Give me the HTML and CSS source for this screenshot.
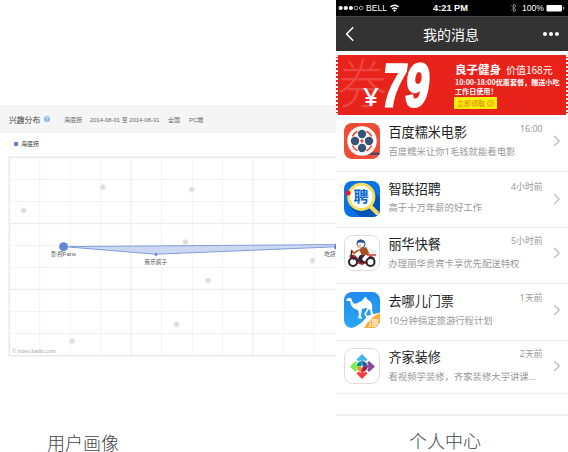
FILE: index.html
```html
<!DOCTYPE html>
<html lang="zh-CN">
<head>
<meta charset="utf-8">
<title>用户画像 · 个人中心</title>
<link rel="stylesheet" href="styles.css">
</head>
<body>
<main class="page">
  <section class="profile">
    <header class="filter"><h2>兴趣分布</h2><span class="help">?</span><span class="f-word">海底捞</span><span class="f-date">2014-08-01 至 2014-08-31</span><span class="f-area">全国</span><span>PC端</span></header>
    <div class="legend"><i></i>海底捞</div>
    <svg class="chart" width="336" height="204" viewBox="0 154 336 204">
      <path class="grid" d="M39.8 158V355M70.2 158V355M100.7 158V355M161.5 158V355M192.3 158V355M222.5 158V355M283.5 158V355M314 158V355M10 179.5H336M10 201.5H336M10 245.5H336M10 267.5H336M10 311.5H336M10 333.5H336"/>
      <path class="grid major" d="M131 158V355M253 158V355M10 223.5H336M10 289.5H336"/>
      <path class="frame" d="M336 157.3H9.3V355.7H336"/>
      <g class="dots"><circle cx="23.6" cy="210.5" r="2.7"/><circle cx="102.8" cy="187.2" r="2.7"/><circle cx="191.8" cy="189.4" r="2.7"/><circle cx="185.5" cy="242.2" r="2.7"/><circle cx="312.5" cy="260.6" r="2.7"/><circle cx="208.1" cy="280.5" r="2.7"/><circle cx="176.5" cy="324.4" r="2.7"/><circle cx="72" cy="341" r="2.7"/></g>
      <path class="area" d="M63.5 246.6L336 244.6V246.8L156 254.2Z"/>
      <circle class="node" cx="63.6" cy="246.7" r="4.8"/><circle class="node" cx="156" cy="254.2" r="2"/><circle class="node" cx="337" cy="246.5" r="3.6"/>
      <text x="51" y="256.3" textLength="25" lengthAdjust="spacingAndGlyphs">影视Fans</text><text x="144.3" y="263.6" textLength="23" lengthAdjust="spacingAndGlyphs">音乐疯子</text><text x="324.3" y="256.3" textLength="11.5">吃货</text>
      <text class="source" x="12" y="353" textLength="44" lengthAdjust="spacingAndGlyphs">© index.baidu.com</text>
    </svg>
    <p class="caption">用户画像</p>
  </section>

  <section class="center">
    <div class="status">
      <svg width="232" height="16" viewBox="0 0 232 16">
        <g fill="#fff"><circle cx="4.7" cy="8" r="2.1"/><circle cx="9.8" cy="8" r="2.1"/><circle cx="14.9" cy="8" r="2.1"/></g>
        <g fill="none" stroke="#ccc" stroke-width=".8"><circle cx="20" cy="8" r="1.8"/><circle cx="25.1" cy="8" r="1.8"/></g>
        <text x="30" y="11" textLength="21" lengthAdjust="spacingAndGlyphs">BELL</text>
        <g fill="none" stroke="#fff" stroke-width="1.3"><path d="M54.3 7Q58.5 3.5 62.7 7M56 9Q58.5 7 61 9"/></g><path fill="#fff" d="M57 10.2Q58.5 9 60 10.2L58.5 12Z"/>
        <text class="clock" x="97" y="11.3" textLength="35" lengthAdjust="spacingAndGlyphs">4:21 PM</text>
        <path fill="none" stroke="#888" stroke-width=".9" d="M175.3 5.4L180 10L177.7 12V3.8L180 6L175.3 10.4"/>
        <text x="186" y="11.3" textLength="22" lengthAdjust="spacingAndGlyphs">100%</text>
        <rect x="210.5" y="5" width="15.5" height="6.5" rx="1" fill="#fff"/><rect x="227" y="7" width="1.2" height="2.5" fill="#aaa"/>
      </svg>
    </div>
    <nav class="nav">
      <svg width="10" height="16" viewBox="0 0 10 16"><path d="M8.2 1.2L1.6 8L8.2 14.8" fill="none" stroke="#fff" stroke-width="1.5"/></svg>
      <h1>我的消息</h1>
      <svg width="18" height="6" viewBox="0 0 18 6" fill="#fff"><circle cx="3" cy="3" r="2"/><circle cx="9" cy="3" r="2"/><circle cx="15" cy="3" r="2"/></svg>
    </nav>
    <div class="coupon">
      <svg class="price" width="119" height="60" viewBox="0 0 119 60">
        <text class="mark" x="-1" y="49" textLength="50" lengthAdjust="spacingAndGlyphs">券</text>
        <text class="yen" x="25" y="51" textLength="16" lengthAdjust="spacingAndGlyphs">¥</text>
        <text class="num" transform="translate(42 51.2) skewX(-7)" textLength="47" lengthAdjust="spacingAndGlyphs">79</text>
      </svg>
      <div class="offer">
        <div class="shop"><b>良子健身</b><span>价值168元</span></div>
        <p>10:00-18:00优惠套餐，赠送小吃<br>工作日使用！</p>
        <div class="claim">立即领取<svg width="7" height="7" viewBox="0 0 7 7"><circle cx="3.5" cy="3.5" r="2.9"/><path d="M2.9 1.8L4.3 3.5L2.9 5.2"/></svg></div>
      </div>
    </div>
    <ul class="list">
      <li class="r1">
        <svg class="icon" viewBox="0 0 36 36"><rect width="36" height="36" rx="8" fill="#f04c38"/><path d="M20 29.5H35.5V32H20Z" fill="#59465c"/><circle cx="18" cy="18" r="14.7" fill="#fff"/><g fill="#365574"><circle cx="18" cy="11" r="4.2"/><circle cx="25" cy="18" r="4.2"/><circle cx="18" cy="25" r="4.2"/><circle cx="11" cy="18" r="4.2"/></g><circle cx="18" cy="18" r="1.7" fill="#f04c38"/><g fill="none" stroke="#f04c38" stroke-width="1.7"><path d="M22.5 8.3Q26 10 27.7 13.5M27.7 22.5Q26 26 22.5 27.7M13.5 27.7Q10 26 8.3 22.5M8.3 13.5Q10 10 13.5 8.3"/></g></svg>
        <div class="copy"><h3>百度糯米电影</h3><p>百度糯米让你1毛钱就能看电影</p></div><time>16:00</time><svg class="go" viewBox="0 0 8 12"><path d="M1.2 1L6.2 6L1.2 11"/></svg>
      </li>
      <li class="r2">
        <svg class="icon" viewBox="0 0 36 36"><rect width="36" height="36" rx="8" fill="#0873e4"/><path d="M6 26L16 36H28Q36 36 36 28V17L27 8Z" fill="#0056b8"/><path d="M26 25L33 32" stroke="#f7dc61" stroke-width="4" stroke-linecap="round"/><circle cx="17.3" cy="15.8" r="12.6" fill="#fff" stroke="#f4df5c" stroke-width="3"/><circle cx="4" cy="12" r="2.5" fill="#f01420"/><text x="9.5" y="21.2" font-size="15" font-weight="700" fill="#0967d1">聘</text></svg>
        <div class="copy"><h3>智联招聘</h3><p>高于十万年薪的好工作</p></div><time>4小时前</time><svg class="go" viewBox="0 0 8 12"><path d="M1.2 1L6.2 6L1.2 11"/></svg>
      </li>
      <li class="r3">
        <svg class="icon" viewBox="0 0 36 36"><rect class="tile" x=".5" y=".5" width="35" height="35" rx="8"/><path d="M5 21Q9 18 12 21L16 26H22L26 20L31 23L29 26L18 30L10 27Z" fill="#b42c29"/><g fill="#fff" stroke="#26202c" stroke-width="2"><circle cx="9" cy="27" r="4"/><circle cx="26.5" cy="27" r="4"/></g><path d="M15 14L22 12L26 19L18 21Z" fill="#a95023"/><path d="M16 20L21 20L18 24L21 28H16L14 23Z" fill="#352338"/><path d="M15 15L10 18L7 16" fill="none" stroke="#b85b27" stroke-width="2"/><circle cx="17" cy="9" r="4" fill="#fff" stroke="#253f7a"/><path d="M12.5 8Q14 3 19 5L21 8L16 7.5Z" fill="#2c509b"/><path d="M13 10L17 9L18 13L14 13Z" fill="#ecc0a0"/><path d="M25 14L32 16V20L25 20Z" fill="#eee" stroke="#ddd" stroke-width=".6"/><path d="M23 20H32" stroke="#d33c3a" stroke-width="1.5"/><path d="M8 15L7 20L10 25M12 24L20 28" fill="none" stroke="#332636" stroke-width="1.3"/></svg>
        <div class="copy"><h3>丽华快餐</h3><p>办理丽华贵宾卡享优先配送特权</p></div><time>5小时前</time><svg class="go" viewBox="0 0 8 12"><path d="M1.2 1L6.2 6L1.2 11"/></svg>
      </li>
      <li class="r4">
        <svg class="icon" viewBox="0 0 36 36"><defs><linearGradient id="sky" x2="0" y2="1"><stop stop-color="#218bed"/><stop offset="1" stop-color="#29a7f4"/></linearGradient><clipPath id="round"><rect width="36" height="36" rx="8"/></clipPath></defs><g clip-path="url(#round)"><rect width="36" height="36" fill="url(#sky)"/><path d="M12 36Q21 25 36 20V36Z" fill="#ffad38"/><path d="M8 36Q19 32 23 24Q28 22 36 21Q25 26 20 36Z" fill="#fff"/><path d="M2 8L4 6L7 6L9 11Q12 13 15 10L18 9Q20 5 22 5Q23 8 26 9Q29 12 28 18L30 24L27 23L26 18L22 16L18 17L17 23L18 27L14 26L15 22L14 18Q7 17 6 9L3 9Z" fill="#fff"/><path d="M24 17L21 22L24 26" fill="none" stroke="#fff" stroke-width="1.5"/><text x="19.5" y="34" font-size="7.8" font-weight="500" fill="#fff">门票</text></g></svg>
        <div class="copy"><h3>去哪儿门票</h3><p>10分钟搞定旅游行程计划</p></div><time>1天前</time><svg class="go" viewBox="0 0 8 12"><path d="M1.2 1L6.2 6L1.2 11"/></svg>
      </li>
      <li class="r5">
        <svg class="icon" viewBox="0 0 36 36"><rect class="tile" x=".5" y=".5" width="35" height="35" rx="8"/><path d="M18 6L23.5 11.5L18 17.5L12.5 11.5Z" fill="#45b5e5"/><path d="M25 13L31 18.5L25 24L18.5 18.5Z" fill="#8b479c"/><path d="M18 19.5L23.5 25.5L18 31L12.5 25.5Z" fill="#f43e40"/><path d="M11.5 13L17.5 18.5L11.5 24L6 18.5Z" fill="#7bed50"/><path d="M12.5 18Q13 14 17.5 13V18Z" fill="#078f86"/><path d="M18.5 13Q23 14 23.5 18H18.5Z" fill="#3557a3"/><path d="M18.5 19H23.5Q23 23 18.5 24Z" fill="#972346"/><path d="M12.5 19H17.5V24Q13 23 12.5 19Z" fill="#e79837"/><path d="M12 17.5Q12.5 13 17 12.5M19 12.5Q23.5 13 24 17.5M24 19.5Q23.5 24 19 24.5M17 24.5Q12.5 24 12 19.5" fill="none" stroke="#fff" stroke-width=".8"/></svg>
        <div class="copy"><h3>齐家装修</h3><p>看视频学装修，齐家装修大学讲课...</p></div><time>2天前</time><svg class="go" viewBox="0 0 8 12"><path d="M1.2 1L6.2 6L1.2 11"/></svg>
      </li>
    </ul>
    <div class="bottom-rule"></div>
    <p class="caption">个人中心</p>
  </section>
</main>
</body>
</html>
```
FILE: styles.css
```css
* { box-sizing: border-box; margin: 0; padding: 0; }
body { width: 568px; height: 452px; overflow: hidden; background: #fff; color: #333; font-family: "Noto Sans", "Noto Sans CJK SC", sans-serif; }
.page { display: grid; grid-template-columns: 336px 232px; height: 452px; }
svg { display: block; flex: none; }
.profile { padding-top: 105px; }
.filter { display: flex; align-items: center; height: 28px; padding-left: 9px; background: #f5f5f5; color: #666; font: 6px "Liberation Sans", "Noto Sans CJK SC", sans-serif; white-space: nowrap; }
.filter h2 { width: 35px; font-size: 7.8px; font-weight: 400; color: #444; }
.help { width: 6px; height: 6px; border-radius: 50%; background: #88b9e4; color: #fff; font-size: 5px; line-height: 6px; text-align: center; }
.f-word { margin-left: 14px; width: 26px; }
.f-date { width: 78px; font-size: 5.9px; }
.f-area { width: 21px; }
.legend { display: flex; align-items: center; height: 21px; padding-left: 14px; gap: 3px; font: 6px "Noto Sans CJK SC", sans-serif; }
.legend i { width: 4px; height: 4px; background: #5d83cc; }
.chart { width: 336px; height: 204px; }
.chart text { font: 6px "Liberation Sans", "Noto Sans CJK SC", sans-serif; fill: #555; }
.chart .source { font-size: 5.5px; fill: #aaa; }
.grid { fill: none; stroke: #f3f3f3; stroke-width: 1; }
.major { stroke: #eee; stroke-width: 1.3; }
.frame { fill: none; stroke: #e9e9e9; stroke-width: 1.6; }
.dots { fill: #dcdcdc; stroke: #f0f0f0; stroke-width: 1; }
.area { fill: #ccd7f2; stroke: #809ed7; stroke-width: 1; }
.node { fill: #6288d1; stroke: #fff; stroke-width: .6; }
.caption { font: 300 18px/22px "Noto Sans CJK SC", sans-serif; color: #444; }
.profile .caption { margin: 73px 0 0 47px; }
.status { height: 16px; background: #000; }
.status text { fill: #fff; font: 8.5px "Liberation Sans", sans-serif; }
.status .clock { font-weight: 700; font-size: 9px; }
.nav { display: flex; align-items: center; height: 35px; padding: 0 8px 0 9px; background: #333; border-top: 1px solid #484848; }
.nav h1 { margin: 0 auto 0 68px; font: 400 14px/20px "Noto Sans CJK SC", sans-serif; color: #fff; }
.coupon { display: flex; height: 60px; margin-top: 4px; background: #e7231c; border-left: 2px dotted #fff; border-right: 2px dotted #fff; color: #fff; }
.price { overflow: visible; }
.price text { fill: #fff; }
.price .mark { font: 300 53px "Noto Sans CJK SC", sans-serif; fill: #ec4640; }
.price .yen { font: 500 26px "Noto Sans", sans-serif; }
.price .num { font: 700 60px "Liberation Sans", sans-serif; stroke: #fff; stroke-width: 3; }
.offer { width: 109px; padding-top: 6px; margin-left: -2px; white-space: nowrap; font-family: "Noto Sans CJK SC", sans-serif; }
.shop { display: flex; align-items: center; gap: 5px; height: 16px; }
.shop b { font-size: 11.5px; }
.shop span { font-size: 10px; }
.offer p { font-size: 7.1px; line-height: 9px; font-weight: 700; margin-top: 1px; }
.claim { display: flex; align-items: center; justify-content: center; gap: 2px; width: 43px; height: 12px; margin-top: 1px; margin-left: -1px; background: #fff000; color: #d6751b; font-size: 7px; line-height: 12px; }
.claim svg { fill: none; stroke: #d6751b; stroke-width: .7; }
.list { list-style: none; }
.list li { display: grid; grid-template-columns: 36px 133px 26px 8px; align-items: start; padding: 8px 0 0 7.5px; border-bottom: 1px solid #ececec; height: 56px; }
.list .r1 { height: 57px; }
.list .r2 { padding-top: 9px; }
.list .r3 { padding-top: 7px; }
.list .r4 { height: 57px; }
.list .r5 { height: 53px; padding-top: 7px; }
.icon { width: 36px; height: 36px; }
.icon text { font-family: "Noto Sans CJK SC", sans-serif; }
.tile { fill: #fff; stroke: #ddd; }
.copy { padding-left: 9px; white-space: nowrap; font-family: "Noto Sans", "Noto Sans CJK SC", sans-serif; }
.copy h3 { font-size: 13.1px; font-weight: 400; line-height: 18px; color: #222; }
.copy p { font-size: 9.35px; line-height: 14px; margin-top: 4px; color: #999; }
.r2 .copy { margin-top: -1px; }
.r2 .copy p { margin-top: 3px; }
.list time { justify-self: end; margin-right: -4px; font-size: 8.8px; line-height: 12px; color: #999; white-space: nowrap; }
.go { width: 8px; height: 12px; margin-top: 12px; margin-left: 14px; }
.go path { fill: none; stroke: #bbb; stroke-width: 1.2; }
.bottom-rule { height: 2px; margin-top: 20px; background: #eee; }
.center .caption { margin: 13px 0 0 73px; }
```
